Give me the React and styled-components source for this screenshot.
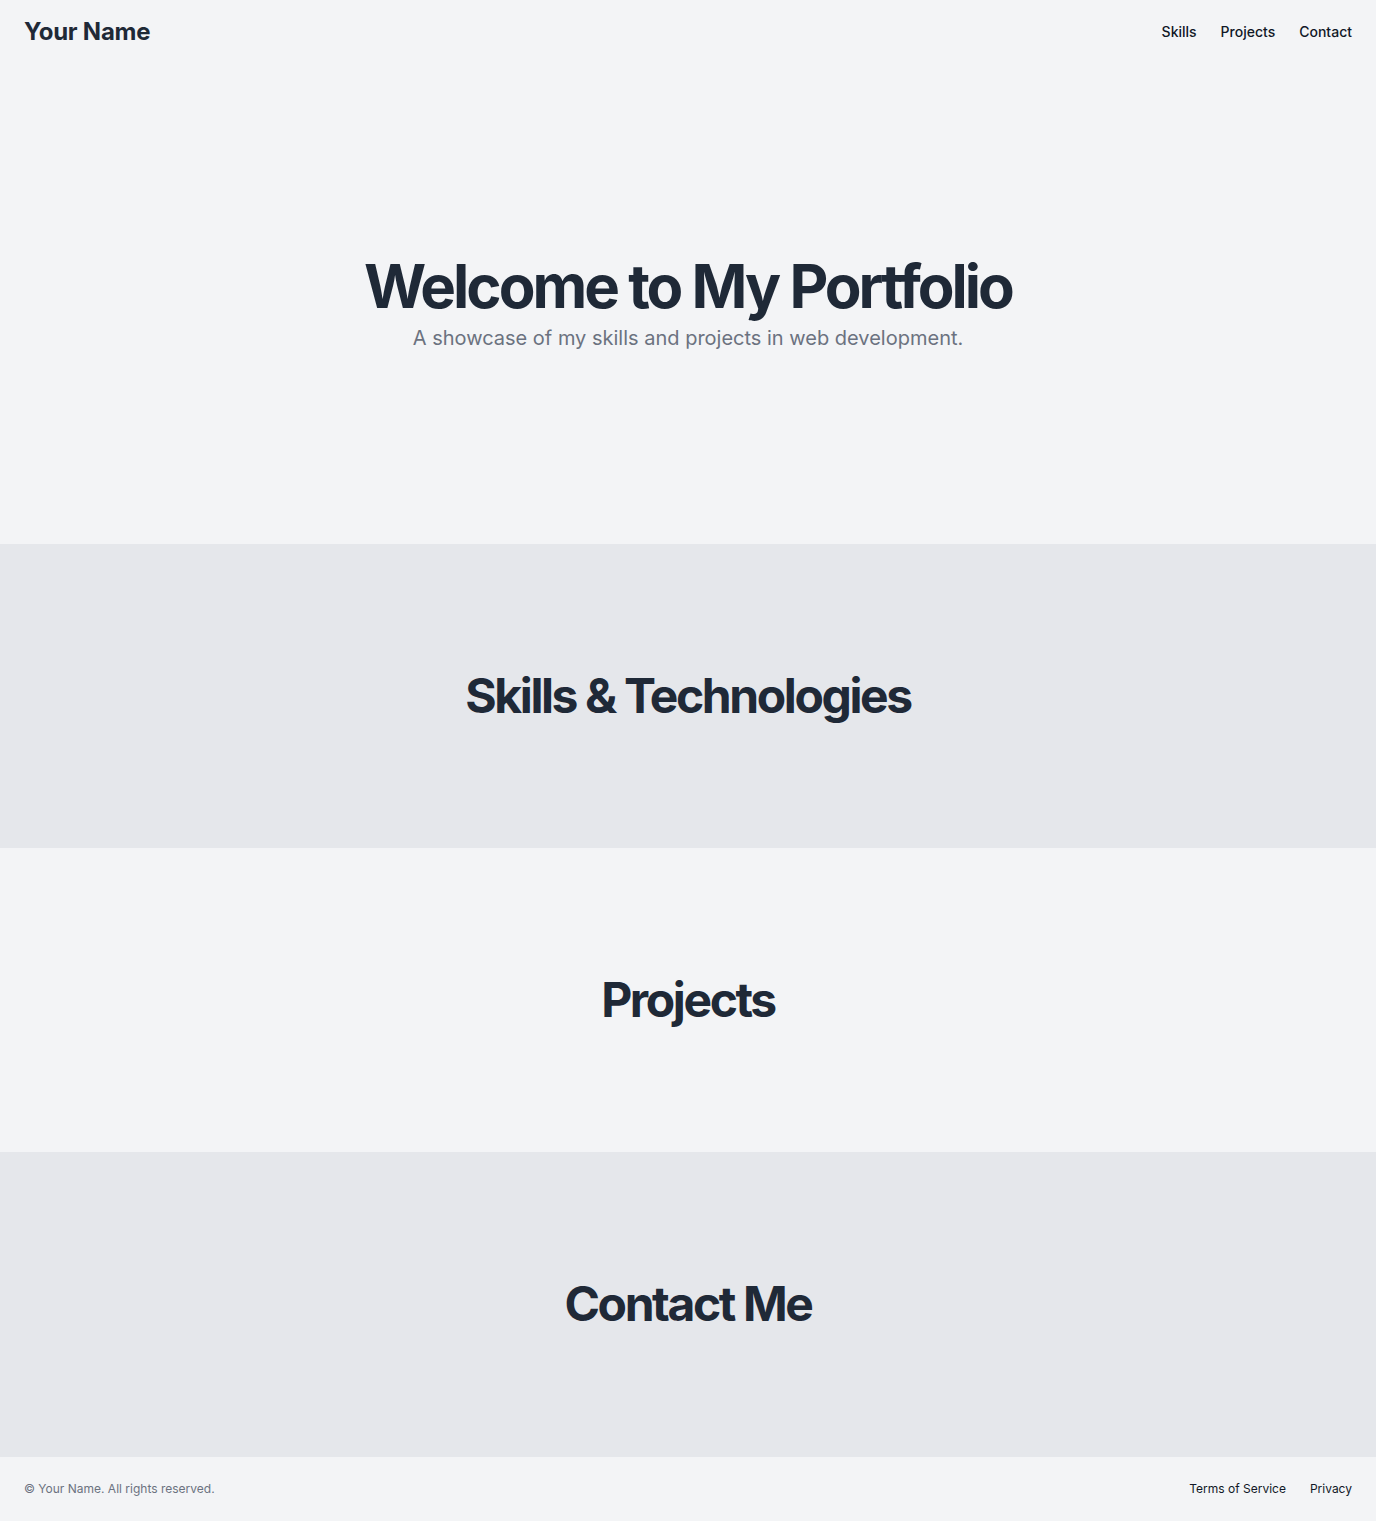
import React from 'react';
import styled, { createGlobalStyle } from 'styled-components';

const GlobalStyle = createGlobalStyle`
  * { box-sizing: border-box; }
  body {
    margin: 0;
    font-family: Inter, "Noto Sans", sans-serif;
    background: #f3f4f6;
    color: #1f2937;
  }
  a { color: inherit; text-decoration: none; }
`;

const Page = styled.div`
  display: flex;
  flex-direction: column;
  min-height: 100vh;
  background: #f3f4f6;
`;

const Header = styled.header`
  display: flex;
  align-items: center;
  justify-content: space-between;
  height: 64px;
  padding: 0 24px 1px;
`;

const Brand = styled.a`
  font-size: 24px;
  line-height: 32px;
  font-weight: 700;
  letter-spacing: -0.01em;
  color: #1f2937;
`;

const Nav = styled.nav`
  display: flex;
  gap: 24px;
`;

const NavLink = styled.a`
  font-size: 14px;
  line-height: 20px;
  font-weight: 500;
  color: #111827;
`;

const Hero = styled.section`
  display: flex;
  flex-direction: column;
  align-items: center;
  justify-content: center;
  height: 480px;
  text-align: center;
`;

const HeroTitle = styled.h1`
  margin: 0;
  font-size: 60px;
  line-height: 1;
  font-weight: 700;
  letter-spacing: -0.05em;
  color: #1f2937;
`;

const HeroSubtitle = styled.p`
  margin: 8px 0 0;
  font-size: 20px;
  line-height: 28px;
  color: #6b7280;
`;

const Section = styled.section`
  padding: 128px 24px;
  text-align: center;
  background: ${(p) => (p.$alt ? '#e5e7eb' : '#f3f4f6')};
`;

const SectionTitle = styled.h2`
  margin: 0;
  font-size: 48px;
  line-height: 1;
  font-weight: 700;
  letter-spacing: -0.05em;
  color: #1f2937;
`;

const Footer = styled.footer`
  display: flex;
  align-items: center;
  justify-content: space-between;
  padding: 24px;
  border-top: 1px solid #e5e7eb;
`;

const Copyright = styled.p`
  margin: 0;
  font-size: 12px;
  line-height: 16px;
  color: #6b7280;
`;

const FooterNav = styled.nav`
  display: flex;
  gap: 24px;
`;

const FooterLink = styled.a`
  font-size: 12px;
  line-height: 16px;
  color: #111827;
`;

const sections = [
  { id: 'skills', title: 'Skills & Technologies', alt: true },
  { id: 'projects', title: 'Projects', alt: false },
  { id: 'contact', title: 'Contact Me', alt: true },
];

export default function App() {
  return (
    <Page>
      <GlobalStyle />
      <Header>
        <Brand href="#">Your Name</Brand>
        <Nav>
          <NavLink href="#skills">Skills</NavLink>
          <NavLink href="#projects">Projects</NavLink>
          <NavLink href="#contact">Contact</NavLink>
        </Nav>
      </Header>
      <Hero>
        <HeroTitle>Welcome to My Portfolio</HeroTitle>
        <HeroSubtitle>A showcase of my skills and projects in web development.</HeroSubtitle>
      </Hero>
      {sections.map((s) => (
        <Section key={s.id} id={s.id} $alt={s.alt}>
          <SectionTitle>{s.title}</SectionTitle>
        </Section>
      ))}
      <Footer>
        <Copyright>© Your Name. All rights reserved.</Copyright>
        <FooterNav>
          <FooterLink href="#">Terms of Service</FooterLink>
          <FooterLink href="#">Privacy</FooterLink>
        </FooterNav>
      </Footer>
    </Page>
  );
}
